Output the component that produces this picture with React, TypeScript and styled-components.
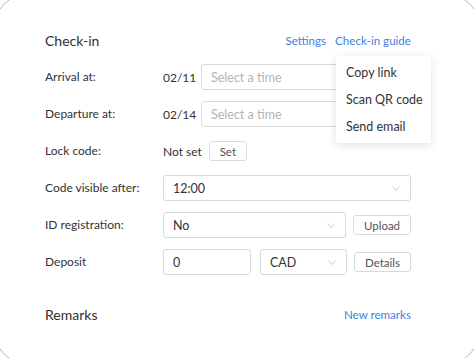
import React from 'react';
import styled, { createGlobalStyle } from 'styled-components';

const GlobalStyle = createGlobalStyle`
  html, body {
    margin: 0;
    padding: 0;
    background: #ffffff;
    overflow: hidden;
  }
  body {
    font-family: Lato, "Open Sans", sans-serif;
    color: #333333;
  }
`;

const Frame = styled.div`
  margin: -8px;
  width: 490px;
  height: 374px;
  box-sizing: border-box;
  border: 1px solid #93cb9d;
  border-radius: 40px;
  padding: 39px 0 0 52px;
`;

const Panel = styled.div`
  width: 366px;
  display: flex;
  flex-direction: column;
`;

const SectionHeader = styled.div<{ $top?: number }>`
  display: flex;
  align-items: center;
  justify-content: space-between;
  height: 16px;
  margin-top: ${({ $top }) => $top ?? 0}px;
`;

const Title = styled.h2`
  margin: 0;
  font-size: 14px;
  font-weight: 400;
  color: #2f2f2f;
`;

const Links = styled.div`
  position: relative;
  display: flex;
  gap: 9px;
`;

const LinkText = styled.a`
  font-size: 11.6px;
  color: #3d7fe0;
  text-decoration: none;
  cursor: pointer;
`;

const Menu = styled.ul`
  position: absolute;
  top: 22px;
  right: -20px;
  width: 95px;
  margin: 0;
  padding: 3px 0;
  list-style: none;
  background: #fff;
  box-shadow: 0 2px 10px rgba(0, 0, 0, 0.12);
  border-radius: 2px;
  z-index: 5;
`;

const MenuItem = styled.li`
  padding: 0 10px;
  height: 27px;
  line-height: 27px;
  font-size: 12.5px;
  color: #333;
  white-space: nowrap;
`;

const Form = styled.div`
  display: grid;
  grid-template-columns: 118px 1fr;
  grid-auto-rows: 26px;
  row-gap: 11px;
  align-items: center;
  margin-top: 16px;
`;

const Label = styled.div`
  font-size: 12px;
  color: #333;
  white-space: nowrap;
  margin-top: -2px;
`;

const Controls = styled.div`
  display: flex;
  align-items: center;
  gap: 7px;
  height: 26px;
`;

const DateText = styled.span`
  font-size: 12px;
  color: #333;
  width: 31px;
`;

const Plain = styled.span`
  font-size: 12px;
  color: #333;
`;

const Field = styled.div<{ $width?: number; $muted?: boolean; $gapBefore?: number }>`
  box-sizing: border-box;
  height: 26px;
  ${({ $width }) => ($width ? `width: ${$width}px;` : 'flex: 1;')}
  margin-left: ${({ $gapBefore }) => $gapBefore ?? 0}px;
  border: 1px solid #d9d9d9;
  border-radius: 3px;
  display: flex;
  align-items: center;
  justify-content: space-between;
  padding: 0 10px 0 9px;
  font-size: 12.5px;
  color: ${({ $muted }) => ($muted ? '#b4b4b4' : '#333')};
  background: #fff;
`;

const Chevron = styled.svg`
  width: 8px;
  height: 5px;
  flex: none;
`;

const SmallButton = styled.button<{ $width: number }>`
  box-sizing: border-box;
  width: ${({ $width }) => $width}px;
  height: 20px;
  padding: 0;
  border: 1px solid #d9d9d9;
  border-radius: 3px;
  background: #fff;
  font-family: inherit;
  font-size: 11.5px;
  color: #555;
`;

const Caret = () => (
  <Chevron viewBox="0 0 8 5">
    <path d="M0.5 0.5 L4 4.5 L7.5 0.5" fill="none" stroke="#c8c8c8" strokeWidth="0.9" />
  </Chevron>
);

export default function App() {
  return (
    <>
      <GlobalStyle />
      <Frame>
        <Panel>
          <SectionHeader>
            <Title>Check-in</Title>
            <Links>
              <LinkText>Settings</LinkText>
              <LinkText>Check-in guide</LinkText>
              <Menu>
                <MenuItem>Copy link</MenuItem>
                <MenuItem>Scan QR code</MenuItem>
                <MenuItem>Send email</MenuItem>
              </Menu>
            </Links>
          </SectionHeader>

          <Form>
            <Label>Arrival at:</Label>
            <Controls>
              <DateText>02/11</DateText>
              <Field $muted>Select a time</Field>
            </Controls>

            <Label>Departure at:</Label>
            <Controls>
              <DateText>02/14</DateText>
              <Field $muted>Select a time</Field>
            </Controls>

            <Label>Lock code:</Label>
            <Controls>
              <Plain>Not set</Plain>
              <SmallButton $width={38}>Set</SmallButton>
            </Controls>

            <Label>Code visible after:</Label>
            <Controls>
              <Field>
                12:00
                <Caret />
              </Field>
            </Controls>

            <Label>ID registration:</Label>
            <Controls>
              <Field>
                No
                <Caret />
              </Field>
              <SmallButton $width={58}>Upload</SmallButton>
            </Controls>

            <Label>Deposit</Label>
            <Controls>
              <Field $width={88}>0</Field>
              <Field $width={87} $gapBefore={2}>
                CAD
                <Caret />
              </Field>
              <SmallButton $width={57}>Details</SmallButton>
            </Controls>
          </Form>

          <SectionHeader $top={31}>
            <Title>Remarks</Title>
            <LinkText>New remarks</LinkText>
          </SectionHeader>
        </Panel>
      </Frame>
    </>
  );
}
